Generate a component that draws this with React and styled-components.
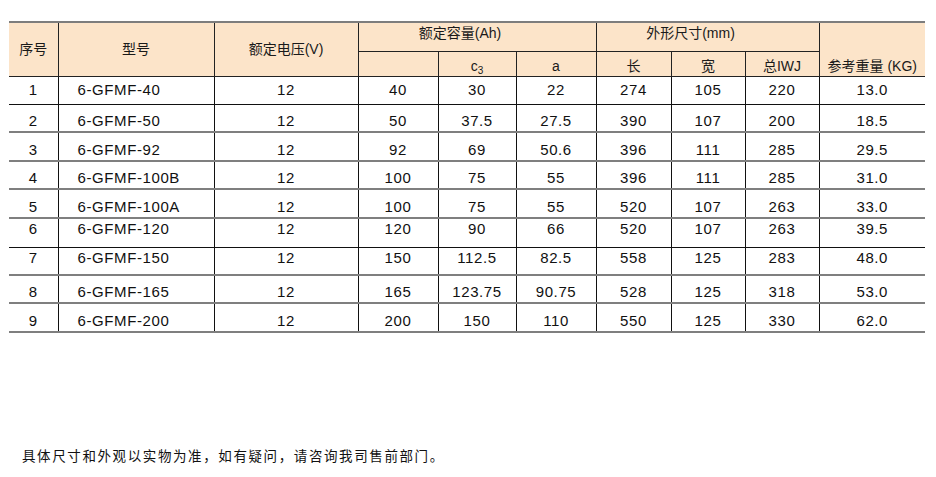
import styled, { createGlobalStyle } from "styled-components";

const GlobalStyle = createGlobalStyle`
  html, body {
    margin: 0;
    padding: 0;
    background: #ffffff;
  }
  body {
    font-family: "Liberation Sans", "Noto Sans CJK SC", Arial, sans-serif;
    color: #111111;
  }
`;

const Page = styled.div`
  width: 936px;
  height: 477px;
  padding-top: 21px;
  box-sizing: border-box;
`;

const Table = styled.table`
  margin-left: 9px;
  width: 916px;
  border-collapse: collapse;
  table-layout: fixed;
`;

const Head = styled.th`
  background: #fce4c9;
  font-family: "Liberation Sans", "Noto Sans CJK SC", sans-serif;
  font-weight: normal;
  font-size: 14px;
  color: #1a1a1a;
  padding: 0;
  height: ${(p) => p.$h || 22}px;
  line-height: 16px;
  text-align: center;
  vertical-align: ${(p) => p.$v || "middle"};
  padding-bottom: ${(p) => (p.$v === "bottom" ? 2 : 0)}px;
  padding-top: ${(p) => (p.$v === "top" ? 2 : 0)}px;
  padding-right: ${(p) => p.$pr || 0}px;
  border-left: ${(p) => (p.$first ? "none" : "1px solid #222")};
  border-top: ${(p) => (p.$top ? "2px solid #7d7d7d" : "none")};
  border-bottom: 1px solid #222;
  box-sizing: border-box;
`;

const Sub = styled.sub`
  font-size: 10px;
  vertical-align: -3px;
  line-height: 0;
`;

const Row = styled.tr`
  height: ${(p) => p.$h}px;

  & > td {
    border-bottom: ${(p) =>
      p.$line === "black" ? "1px solid #111" : "2px solid #7f7f7f"};
    vertical-align: ${(p) => p.$v};
  }
`;

const Cell = styled.td`
  padding: 0;
  padding-left: ${(p) => p.$pl || 0}px;
  font-size: 15px;
  letter-spacing: 0.6px;
  line-height: 20px;
  color: #111111;
  text-align: ${(p) => p.$align || "center"};
  border-left: ${(p) => (p.$first ? "none" : "1px solid #111")};
  white-space: nowrap;
`;

const Note = styled.p`
  margin: 112px 0 0 22px;
  font-family: "Noto Sans CJK SC", "Liberation Sans", sans-serif;
  font-size: 13.5px;
  letter-spacing: 1.6px;
  line-height: 20px;
  color: #111111;
`;

const widths = [49, 156, 144, 80, 78, 80, 75, 74, 74, 106];

const rows = [
  { h: 28, v: "middle", line: "black", d: ["1", "6-GFMF-40", "12", "40", "30", "22", "274", "105", "220", "13.0"] },
  { h: 28, v: "bottom", line: "gray", d: ["2", "6-GFMF-50", "12", "50", "37.5", "27.5", "390", "107", "200", "18.5"] },
  { h: 29, v: "bottom", line: "gray", d: ["3", "6-GFMF-92", "12", "92", "69", "50.6", "396", "111", "285", "29.5"] },
  { h: 28, v: "bottom", line: "gray", d: ["4", "6-GFMF-100B", "12", "100", "75", "55", "396", "111", "285", "31.0"] },
  { h: 29, v: "bottom", line: "gray", d: ["5", "6-GFMF-100A", "12", "100", "75", "55", "520", "107", "263", "33.0"] },
  { h: 29, v: "top", line: "black", d: ["6", "6-GFMF-120", "12", "120", "90", "66", "520", "107", "263", "39.5"] },
  { h: 28, v: "top", line: "gray", d: ["7", "6-GFMF-150", "12", "150", "112.5", "82.5", "558", "125", "283", "48.0"] },
  { h: 28, v: "bottom", line: "gray", d: ["8", "6-GFMF-165", "12", "165", "123.75", "90.75", "528", "125", "318", "53.0"] },
  { h: 29, v: "bottom", line: "gray", d: ["9", "6-GFMF-200", "12", "200", "150", "110", "550", "125", "330", "62.0"] },
];

export default function App() {
  return (
    <>
      <GlobalStyle />
      <Page>
        <Table>
          <colgroup>
            {widths.map((w, i) => (
              <col key={i} style={{ width: w }} />
            ))}
          </colgroup>
          <thead>
            <tr>
              <Head rowSpan={2} $first $top>序号</Head>
              <Head rowSpan={2} $top>型号</Head>
              <Head rowSpan={2} $top>额定电压(V)</Head>
              <Head colSpan={3} $top $h={29} $v="top" $pr={34}>
                额定容量(Ah)
              </Head>
              <Head colSpan={3} $top $h={29} $v="top" $pr={34}>
                外形尺寸(mm)
              </Head>
              <Head rowSpan={2} $top $v="bottom">参考重量 (KG)</Head>
            </tr>
            <tr>
              <Head $h={25} $v="bottom"></Head>
              <Head $h={25} $v="bottom">
                c<Sub>3</Sub>
              </Head>
              <Head $h={25} $v="bottom">a</Head>
              <Head $h={25} $v="bottom">长</Head>
              <Head $h={25} $v="bottom">宽</Head>
              <Head $h={25} $v="bottom">总IWJ</Head>
            </tr>
          </thead>
          <tbody>
            {rows.map((r) => (
              <Row key={r.d[0]} $h={r.h} $v={r.v} $line={r.line}>
                {r.d.map((val, i) => (
                  <Cell
                    key={i}
                    $first={i === 0}
                    $align={i === 1 ? "left" : "center"}
                    $pl={i === 1 ? 19 : 0}
                  >
                    {val}
                  </Cell>
                ))}
              </Row>
            ))}
          </tbody>
        </Table>
        <Note>具体尺寸和外观以实物为准，如有疑问，请咨询我司售前部门。</Note>
      </Page>
    </>
  );
}
